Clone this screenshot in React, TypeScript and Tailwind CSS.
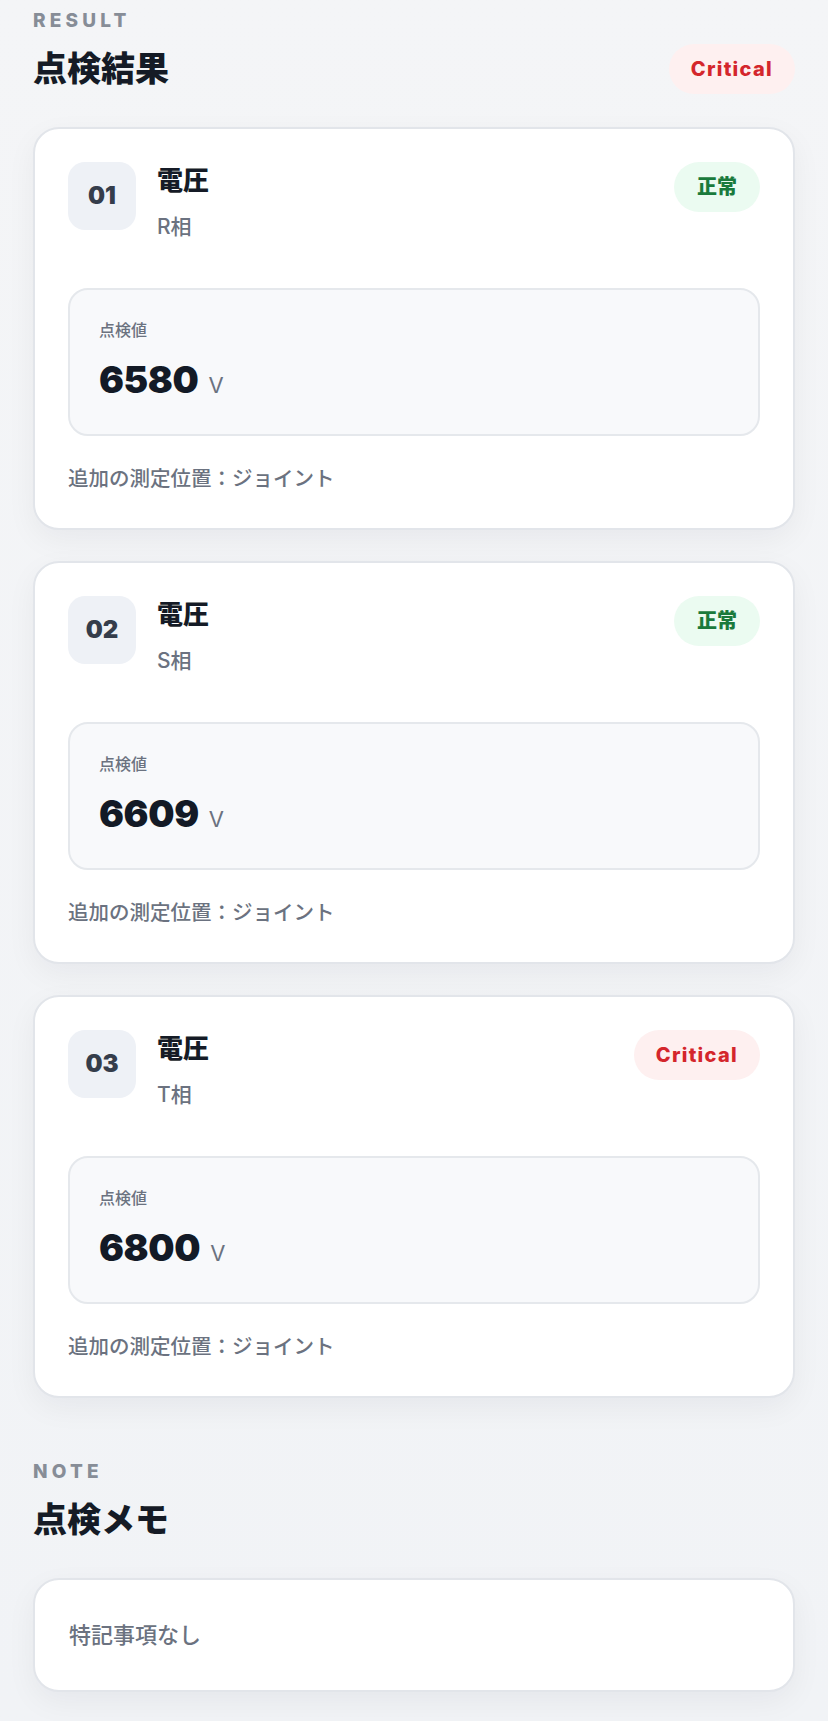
import React from "react";

type Item = { no: string; name: string; phase: string; value: string; unit: string; status: "ok" | "critical"; note: string };

const items: Item[] = [
  { no: "01", name: "電圧", phase: "R相", value: "6580", unit: "V", status: "ok", note: "追加の測定位置：ジョイント" },
  { no: "02", name: "電圧", phase: "S相", value: "6609", unit: "V", status: "ok", note: "追加の測定位置：ジョイント" },
  { no: "03", name: "電圧", phase: "T相", value: "6800", unit: "V", status: "critical", note: "追加の測定位置：ジョイント" },
];

function Badge({ status }: { status: "ok" | "critical" }) {
  if (status === "ok") {
    return (
      <span className="flex h-[50px] shrink-0 items-center rounded-full bg-[#ebfbf1] px-[23px] text-[20px] font-black text-[#1a7a3c]">
        正常
      </span>
    );
  }
  return (
    <span className="flex h-[50px] shrink-0 items-center rounded-full bg-[#fef0f0] px-[22px] text-[20px] font-extrabold tracking-[0.065em] text-[#d4262c]">
      Critical
    </span>
  );
}

function SectionHeader({ label, title, badge }: { label: string; title: string; badge?: React.ReactNode }) {
  return (
    <div className="flex items-end justify-between">
      <div className="flex flex-col">
        <div className="text-[19px] font-extrabold leading-[24px] tracking-[0.22em] text-[#878d97]">{label}</div>
        <div className="mt-[11px] text-[34px] font-black leading-[50px] text-[#151b26]">{title}</div>
      </div>
      {badge}
    </div>
  );
}

function Card({ item }: { item: Item }) {
  return (
    <div className="rounded-[26px] border-2 border-[#e2e5ea] bg-white p-[33px] shadow-[0_10px_30px_rgba(15,23,42,0.05)]">
      <div className="flex items-start">
        <div className="flex h-[68px] w-[68px] shrink-0 items-center justify-center rounded-[17px] bg-[#eef1f6] text-[24px] font-black text-[#353d4b]">
          {item.no}
        </div>
        <div className="ml-[21px] flex flex-1 flex-col">
          <div className="text-[26px] font-black leading-[38px] text-[#151b26]">{item.name}</div>
          <div className="mt-[12px] text-[21px] font-medium leading-[30px] text-[#6b7280]">{item.phase}</div>
        </div>
        <Badge status={item.status} />
      </div>
      <div className="mt-[46px] h-[148px] rounded-[20px] border-2 border-[#e5e8ec] bg-[#f8f9fb] px-[29px] pt-[28px]">
        <div className="text-[16px] font-medium leading-[24px] text-[#6b7280]">点検値</div>
        <div className="mt-[16px] flex items-baseline leading-[44px]">
          <span className="text-[37px] font-black tracking-[-0.01em] text-[#131a26]">{item.value}</span>
          <span className="ml-[10px] text-[22px] text-[#6b7280]">{item.unit}</span>
        </div>
      </div>
      <div className="mt-[27px] text-[20.5px] font-medium leading-[32px] text-[#6b7280]">{item.note}</div>
    </div>
  );
}

export default function App() {
  return (
    <div
      className="min-h-[1721px] bg-gradient-to-b from-[#f4f5f7] to-[#f1f3f6] px-[33px] pb-[30px] pt-[9px]"
      style={{ fontFamily: 'Inter, "Noto Sans CJK JP", "Noto Sans", sans-serif' }}
    >
      <SectionHeader label="RESULT" title="点検結果" badge={<Badge status="critical" />} />
      <div className="mt-[33px] flex flex-col gap-[31px]">
        {items.map((it) => (
          <Card key={it.no} item={it} />
        ))}
      </div>
      <div className="mt-[62px]">
        <SectionHeader label="NOTE" title="点検メモ" />
      </div>
      <div className="mt-[33px] rounded-[26px] border-2 border-[#e2e5ea] bg-white px-[34px] py-[39px] shadow-[0_10px_30px_rgba(15,23,42,0.05)]">
        <div className="text-[22px] font-medium leading-[32px] text-[#6b7280]">特記事項なし</div>
      </div>
    </div>
  );
}
